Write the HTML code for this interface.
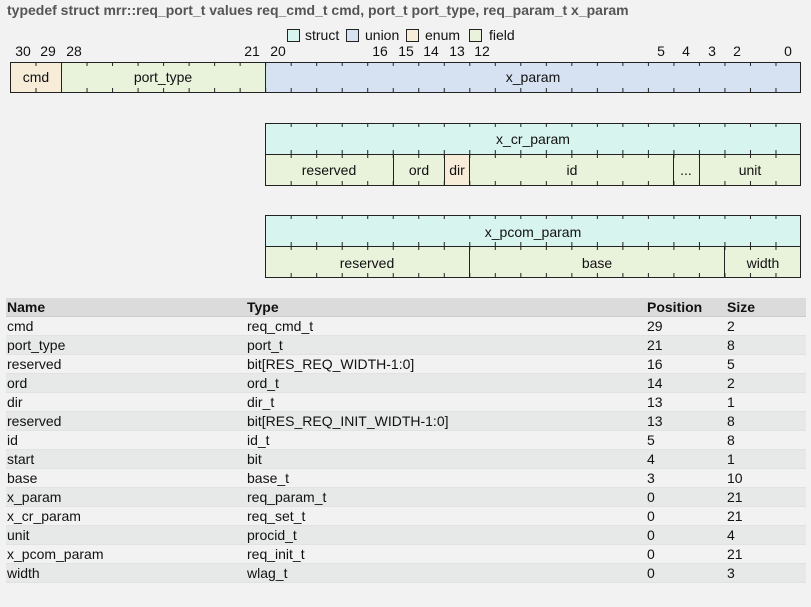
<!DOCTYPE html>
<html><head><style>
html,body{margin:0;padding:0;background:#f2f2f2;width:811px;height:607px;overflow:hidden;font-family:"Liberation Sans",sans-serif;}
.title{position:absolute;left:7px;top:2px;font-size:14px;font-weight:bold;color:#555;font-family:"Liberation Sans",sans-serif;letter-spacing:0px;}
table{position:absolute;left:6px;top:298px;width:800px;border-collapse:collapse;font-size:14px;color:#111;table-layout:fixed;}
td,th{height:18px;padding:0 0 0 1px;text-align:left;line-height:18px;white-space:nowrap;box-sizing:content-box;}
th{background:#dcdbdc;font-weight:bold;border-bottom:1px solid #ccc;}
tr:nth-child(even) td{background:#f2f2f2;}
tr:nth-child(odd) td{background:#e7e8e8;}
tr td{border-bottom:1px solid #e2e2e2;}
</style></head><body>
<div class="title">typedef struct mrr::req_port_t values req_cmd_t cmd, port_t port_type, req_param_t x_param</div>
<svg width="811" height="290" style="position:absolute;left:0;top:0" font-family="Liberation Sans, sans-serif" font-size="14">
<defs>
<pattern id="tk" x="10" y="0" width="25.516" height="290" patternUnits="userSpaceOnUse">
<line x1="0.5" y1="0" x2="0.5" y2="290" stroke="#222" stroke-width="1"/>
</pattern>
</defs>
<rect x="287.5" y="29.5" width="12" height="12" fill="#d8f4ee" stroke="#222"/>
<text x="305" y="40" fill="#111">struct</text>
<rect x="346.5" y="29.5" width="12" height="12" fill="#d6e2f2" stroke="#222"/>
<text x="365" y="40" fill="#111">union</text>
<rect x="406.5" y="29.5" width="12" height="12" fill="#f6ecd8" stroke="#222"/>
<text x="425" y="40" fill="#111">enum</text>
<rect x="469.5" y="29.5" width="12" height="12" fill="#e9f2db" stroke="#222"/>
<text x="489" y="40" fill="#111">field</text>
<g text-anchor="middle" fill="#111">
<text x="23" y="56">30</text><text x="48" y="56">29</text><text x="74" y="56">28</text>
<text x="252" y="56">21</text><text x="278" y="56">20</text><text x="380" y="56">16</text>
<text x="406" y="56">15</text><text x="431" y="56">14</text><text x="457" y="56">13</text>
<text x="482" y="56">12</text><text x="661" y="56">5</text><text x="686" y="56">4</text>
<text x="712" y="56">3</text><text x="737" y="56">2</text><text x="788" y="56">0</text>
</g>
<rect x="10.5" y="62.5" width="51" height="30" fill="#f6ecd8"/>
<rect x="61.5" y="62.5" width="204" height="30" fill="#e9f2db"/>
<rect x="265.5" y="62.5" width="535" height="30" fill="#d6e2f2"/>
<rect x="10" y="62" width="791" height="4" fill="url(#tk)"/>
<rect x="10" y="88" width="791" height="4" fill="url(#tk)"/>
<rect x="10.5" y="62.5" width="790" height="30" fill="none" stroke="#222"/>
<line x1="61.5" y1="62" x2="61.5" y2="93" stroke="#222"/>
<line x1="265.5" y1="62" x2="265.5" y2="93" stroke="#222"/>
<g text-anchor="middle" fill="#111">
<text x="36" y="82">cmd</text><text x="163" y="82">port_type</text><text x="533" y="82">x_param</text>
</g>
<rect x="265.5" y="123.5" width="535" height="31" fill="#d8f4ee"/>
<rect x="265.5" y="154.5" width="535" height="31" fill="#e9f2db"/>
<rect x="444.5" y="154.5" width="25" height="31" fill="#f6ecd8"/>
<rect x="275" y="123" width="526" height="4" fill="url(#tk)"/>
<rect x="275" y="150" width="526" height="8" fill="url(#tk)"/>
<rect x="275" y="181" width="526" height="4" fill="url(#tk)"/>
<rect x="265.5" y="123.5" width="535" height="62" fill="none" stroke="#222"/>
<line x1="265" y1="154.5" x2="801" y2="154.5" stroke="#222"/>
<g stroke="#222"><line x1="393.5" y1="154" x2="393.5" y2="186"/><line x1="444.5" y1="154" x2="444.5" y2="186"/><line x1="469.5" y1="154" x2="469.5" y2="186"/><line x1="673.5" y1="154" x2="673.5" y2="186"/><line x1="699.5" y1="154" x2="699.5" y2="186"/></g>
<g text-anchor="middle" fill="#111">
<text x="533" y="144">x_cr_param</text>
<text x="329" y="175">reserved</text><text x="419" y="175">ord</text><text x="457" y="175">dir</text>
<text x="572" y="175">id</text><text x="686" y="175">...</text><text x="750" y="175">unit</text>
</g>
<rect x="265.5" y="215.5" width="535" height="31" fill="#d8f4ee"/>
<rect x="265.5" y="246.5" width="535" height="31" fill="#e9f2db"/>
<rect x="275" y="215" width="526" height="4" fill="url(#tk)"/>
<rect x="275" y="242" width="526" height="8" fill="url(#tk)"/>
<rect x="275" y="273" width="526" height="4" fill="url(#tk)"/>
<rect x="265.5" y="215.5" width="535" height="62" fill="none" stroke="#222"/>
<line x1="265" y1="246.5" x2="801" y2="246.5" stroke="#222"/>
<g stroke="#222"><line x1="469.5" y1="246" x2="469.5" y2="278"/><line x1="724.5" y1="246" x2="724.5" y2="278"/></g>
<g text-anchor="middle" fill="#111">
<text x="533" y="237">x_pcom_param</text>
<text x="367" y="268">reserved</text><text x="597" y="268">base</text><text x="763" y="268">width</text>
</g>
</svg>
<table>
<colgroup><col style="width:240px"><col style="width:400px"><col style="width:80px"><col></colgroup>
<tr><th>Name</th><th>Type</th><th>Position</th><th>Size</th></tr>
<tr><td>cmd</td><td>req_cmd_t</td><td>29</td><td>2</td></tr>
<tr><td>port_type</td><td>port_t</td><td>21</td><td>8</td></tr>
<tr><td>reserved</td><td>bit[RES_REQ_WIDTH-1:0]</td><td>16</td><td>5</td></tr>
<tr><td>ord</td><td>ord_t</td><td>14</td><td>2</td></tr>
<tr><td>dir</td><td>dir_t</td><td>13</td><td>1</td></tr>
<tr><td>reserved</td><td>bit[RES_REQ_INIT_WIDTH-1:0]</td><td>13</td><td>8</td></tr>
<tr><td>id</td><td>id_t</td><td>5</td><td>8</td></tr>
<tr><td>start</td><td>bit</td><td>4</td><td>1</td></tr>
<tr><td>base</td><td>base_t</td><td>3</td><td>10</td></tr>
<tr><td>x_param</td><td>req_param_t</td><td>0</td><td>21</td></tr>
<tr><td>x_cr_param</td><td>req_set_t</td><td>0</td><td>21</td></tr>
<tr><td>unit</td><td>procid_t</td><td>0</td><td>4</td></tr>
<tr><td>x_pcom_param</td><td>req_init_t</td><td>0</td><td>21</td></tr>
<tr><td>width</td><td>wlag_t</td><td>0</td><td>3</td></tr>
</table>
</body></html>
